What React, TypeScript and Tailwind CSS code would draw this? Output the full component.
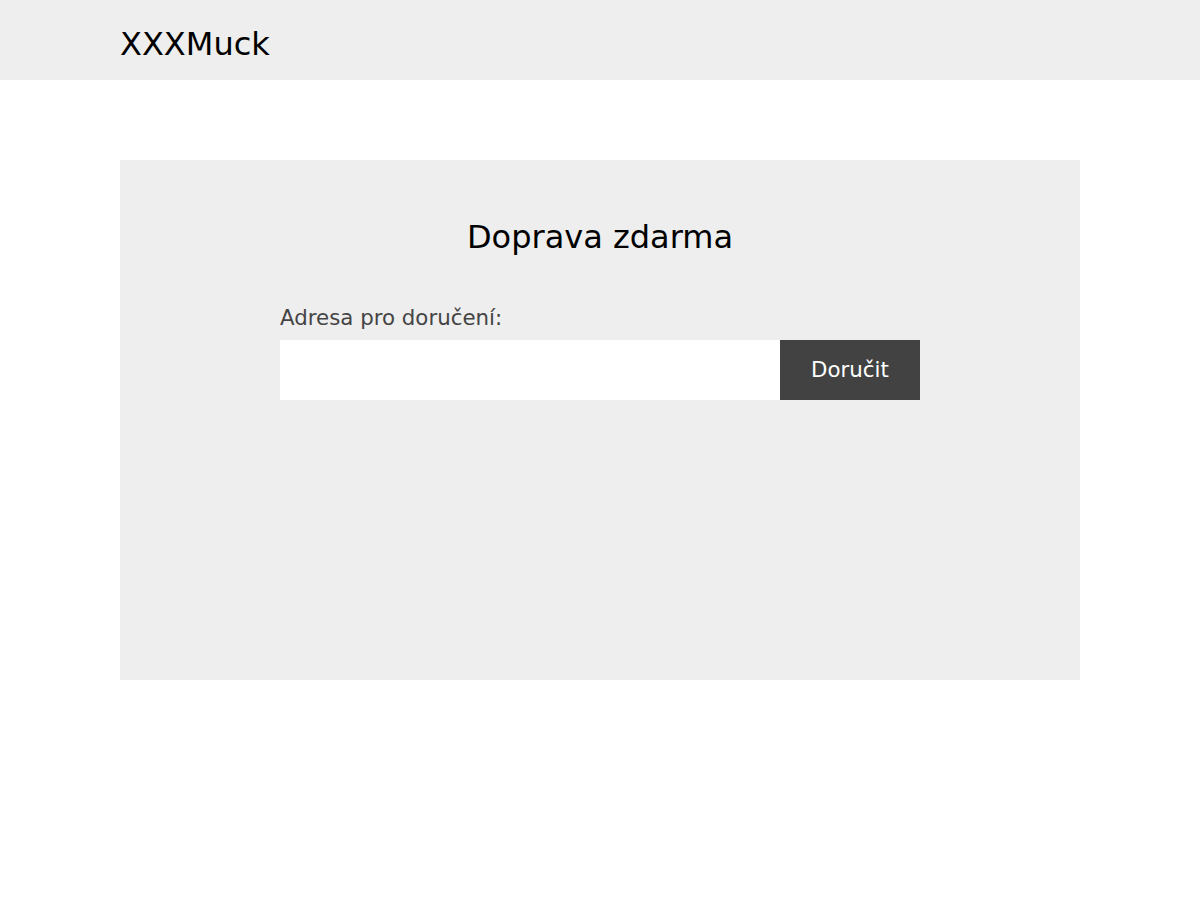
import React, { useState } from 'react';

export default function App() {
    const [address, setAddress] = useState('');

    return (
        <div className="min-h-[900px] bg-white text-black" style={{ fontFamily: '"DejaVu Sans", sans-serif' }}>
            <header className="h-20 bg-[#eeeeee]">
                <div className="mx-[120px] flex h-full items-center pt-[7px]">
                    <h1 className="text-[32px] leading-none">XXXMuck</h1>
                </div>
            </header>
            <main className="mx-[120px] mt-20">
                <section className="h-[520px] bg-[#eeeeee] pt-[58px]">
                    <h2 className="h-[38px] text-center text-[32px] leading-[38px]">Doprava zdarma</h2>
                    <form
                        className="mx-auto mt-12 w-[640px]"
                        onSubmit={(e) => {
                            e.preventDefault();
                        }}
                    >
                        <label htmlFor="address" className="block h-7 text-[21.33px] leading-7 text-[#444444]">
                            Adresa pro doručení:
                        </label>
                        <div className="mt-2 flex h-[60px]">
                            <input
                                id="address"
                                type="text"
                                value={address}
                                onChange={(e) => setAddress(e.target.value)}
                                className="h-full w-[500px] bg-white px-4 text-[21.33px] outline-none"
                            />
                            <button type="submit" className="h-full w-[140px] bg-[#424242] text-[21.33px] text-white">
                                Doručit
                            </button>
                        </div>
                    </form>
                </section>
            </main>
        </div>
    );
}
